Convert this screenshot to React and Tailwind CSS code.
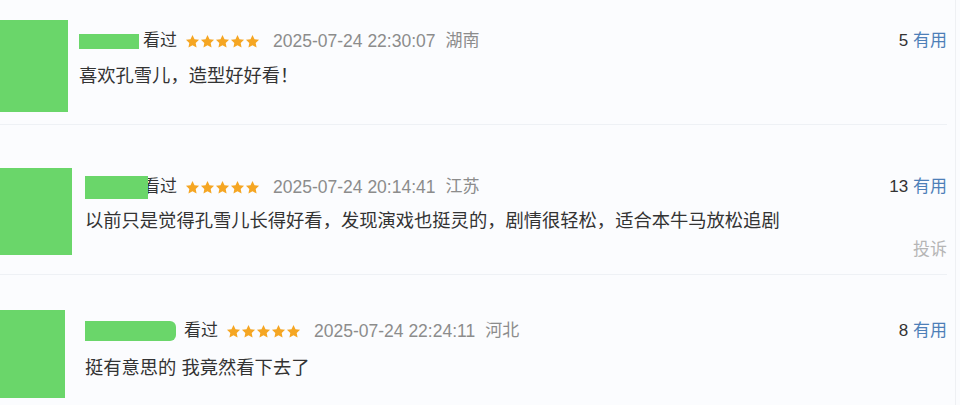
const reviews = [
  {
    h: 'h-[125px]',
    avatar: 'mt-[20px] w-[68px] h-[92px]',
    content: 'ml-[11px] pt-[29px]',
    name: 'w-[60px] h-[15px]',
    seen: 'ml-[4px]',
    date: '2025-07-24 22:30:07',
    region: '湖南',
    text: '喜欢孔雪儿，造型好好看！',
    gap: 'mt-[11px]',
    votes: 5,
    border: true,
  },
  {
    h: 'h-[150px]',
    avatar: 'mt-[43px] w-[72px] h-[87px]',
    content: 'ml-[13px] pt-[50px]',
    name: 'w-[63px] h-[23px] relative z-10',
    seen: '-ml-[5px]',
    date: '2025-07-24 20:14:41',
    region: '江苏',
    text: '以前只是觉得孔雪儿长得好看，发现演戏也挺灵的，剧情很轻松，适合本牛马放松追剧',
    gap: 'mt-[10px]',
    votes: 13,
    report: true,
    border: true,
  },
  {
    h: 'h-[128px]',
    avatar: 'mt-[35px] w-[65px] h-[88px]',
    content: 'ml-[20px] pt-[44px]',
    name: 'w-[91px] h-[20px] rounded-r-[6px]',
    seen: 'ml-[8px]',
    date: '2025-07-24 22:24:11',
    region: '河北',
    text: '挺有意思的 我竟然看下去了',
    gap: 'mt-[13px]',
    votes: 8,
    border: false,
  },
];

function Star() {
  return (
    <svg viewBox="0 0 24 24" className="w-[15px] h-[15px]" fill="#f5a623">
      <path d="M12 1.5l3.2 6.7 7.3.9-5.4 5.1 1.4 7.3L12 17.9l-6.5 3.6 1.4-7.3-5.4-5.1 7.3-.9z" />
    </svg>
  );
}

function Review({ r }) {
  return (
    <div className={`${r.h} flex items-start ${r.border ? 'border-b border-[#eef1f5]' : ''}`}>
      <div className={`${r.avatar} shrink-0 bg-[#6ad66a]`} />
      <div className={`${r.content} flex-1 flex flex-col`}>
        <div className="flex items-center h-[24px]">
          <div className={`${r.name} bg-[#6ad66a]`} />
          <span className={`${r.seen} text-[17px] text-[#333]`}>看过</span>
          <div className="flex ml-[8px]">
            {[0, 1, 2, 3, 4].map((i) => (
              <Star key={i} />
            ))}
          </div>
          <span className="ml-[13px] text-[17.5px] text-[#8c8c8c]">{r.date}</span>
          <span className="ml-[10px] text-[17px] text-[#8c8c8c]">{r.region}</span>
          <span className="ml-auto text-[17px] text-[#333]">
            {r.votes} <span className="text-[#4d7fb8]">有用</span>
          </span>
        </div>
        <p className={`${r.gap} h-[24px] leading-[24px] text-[18.3px] text-[#333]`}>{r.text}</p>
        {r.report && (
          <div className="mt-[5px] h-[24px] leading-[24px] text-right text-[17px] text-[#b5b5b5]">投诉</div>
        )}
      </div>
    </div>
  );
}

export default function App() {
  return (
    <div
      className="w-[960px] h-[405px] overflow-hidden bg-[#fbfcfe]"
      style={{ fontFamily: '"Liberation Sans", "Noto Sans CJK SC", sans-serif' }}
    >
      <div className="w-[956px] h-[405px] border-r border-[#eef0f3] pr-[8px]">
        {reviews.map((r, i) => (
          <Review key={i} r={r} />
        ))}
      </div>
    </div>
  );
}
